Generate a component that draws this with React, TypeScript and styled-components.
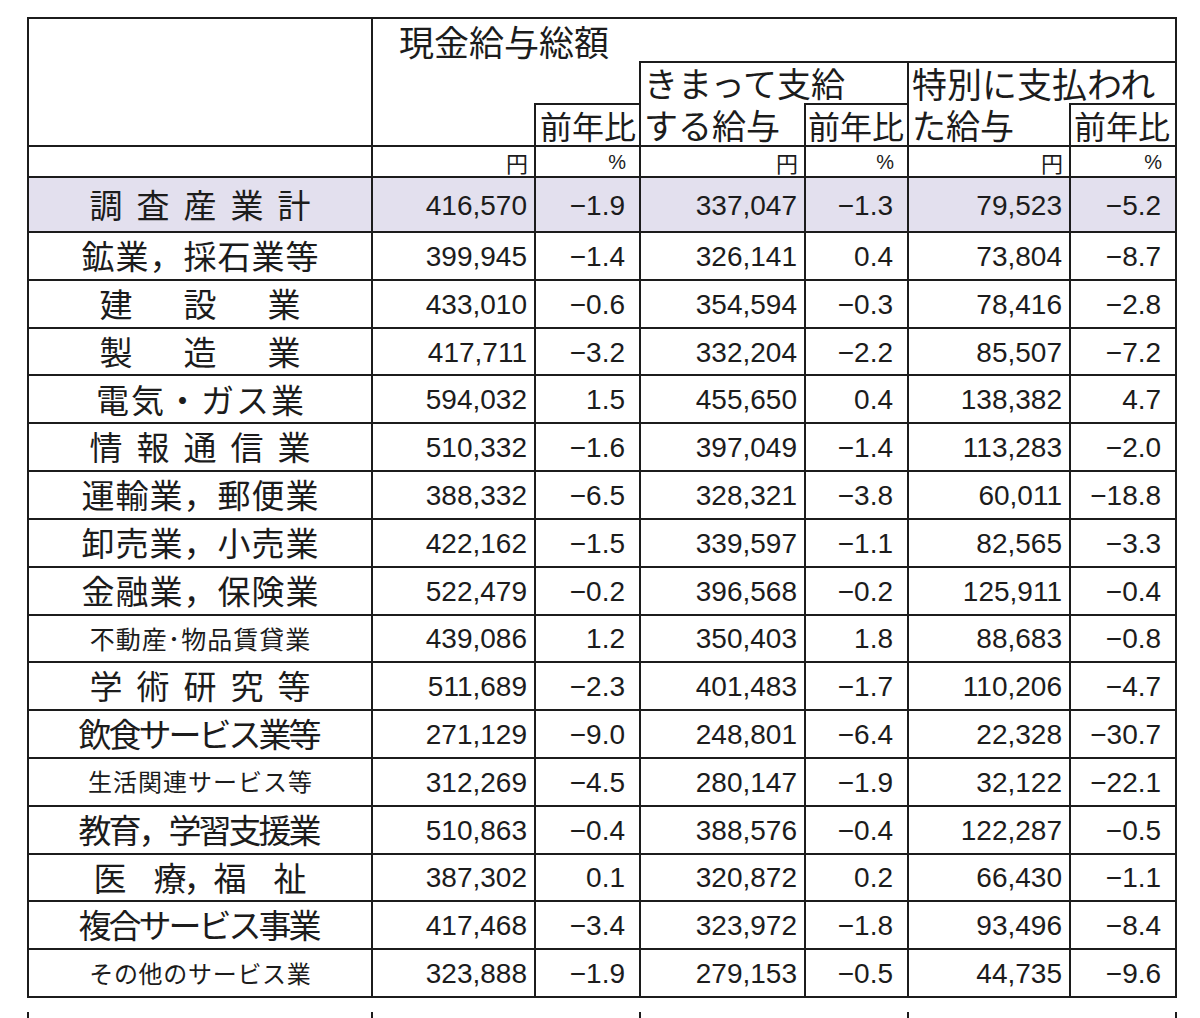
import styled, { createGlobalStyle } from "styled-components";

const LINE = "2px solid #1c1c1c";
const JP = `"Noto Sans CJK JP", "Noto Sans", sans-serif`;
const NUM = `"Liberation Sans", Arial, sans-serif`;

const COLS = [344, 163, 105, 165, 103, 162, 106];

type Industry = {
  label: string;
  size: number;
  spacing: number;
  values: string[];
  total?: boolean;
};

const industries: Industry[] = [
  { label: "調査産業計", size: 33, spacing: 14, total: true, values: ["416,570", "−1.9", "337,047", "−1.3", "79,523", "−5.2"] },
  { label: "鉱業，採石業等", size: 33, spacing: 1, values: ["399,945", "−1.4", "326,141", "0.4", "73,804", "−8.7"] },
  { label: "建設業", size: 33, spacing: 51, values: ["433,010", "−0.6", "354,594", "−0.3", "78,416", "−2.8"] },
  { label: "製造業", size: 33, spacing: 51, values: ["417,711", "−3.2", "332,204", "−2.2", "85,507", "−7.2"] },
  { label: "電気・ガス業", size: 33, spacing: 2, values: ["594,032", "1.5", "455,650", "0.4", "138,382", "4.7"] },
  { label: "情報通信業", size: 33, spacing: 14, values: ["510,332", "−1.6", "397,049", "−1.4", "113,283", "−2.0"] },
  { label: "運輸業，郵便業", size: 33, spacing: 1, values: ["388,332", "−6.5", "328,321", "−3.8", "60,011", "−18.8"] },
  { label: "卸売業，小売業", size: 33, spacing: 1, values: ["422,162", "−1.5", "339,597", "−1.1", "82,565", "−3.3"] },
  { label: "金融業，保険業", size: 33, spacing: 1, values: ["522,479", "−0.2", "396,568", "−0.2", "125,911", "−0.4"] },
  { label: "不動産･物品賃貸業", size: 25, spacing: 1, values: ["439,086", "1.2", "350,403", "1.8", "88,683", "−0.8"] },
  { label: "学術研究等", size: 33, spacing: 14, values: ["511,689", "−2.3", "401,483", "−1.7", "110,206", "−4.7"] },
  { label: "飲食サービス業等", size: 33, spacing: -3, values: ["271,129", "−9.0", "248,801", "−6.4", "22,328", "−30.7"] },
  { label: "生活関連サービス等", size: 24, spacing: 1, values: ["312,269", "−4.5", "280,147", "−1.9", "32,122", "−22.1"] },
  { label: "教育，学習支援業", size: 33, spacing: -3, values: ["510,863", "−0.4", "388,576", "−0.4", "122,287", "−0.5"] },
  { label: "医　療，福　祉", size: 33, spacing: -3, values: ["387,302", "0.1", "320,872", "0.2", "66,430", "−1.1"] },
  { label: "複合サービス事業", size: 33, spacing: -3, values: ["417,468", "−3.4", "323,972", "−1.8", "93,496", "−8.4"] },
  { label: "その他のサービス業", size: 24, spacing: 0.7, values: ["323,888", "−1.9", "279,153", "−0.5", "44,735", "−9.6"] },
];

const GlobalStyle = createGlobalStyle`
  html, body {
    margin: 0;
    background: #ffffff;
  }
  body {
    font-family: ${JP};
    color: #1c1c1c;
  }
`;

const Page = styled.div`
  padding: 17px 0 0 27px;
  width: 1200px;
  height: 1018px;
  box-sizing: border-box;
  overflow: hidden;
`;

const Sheet = styled.table`
  border-collapse: separate;
  border-spacing: 0;
  table-layout: fixed;
  width: 1150px;
  border-top: ${LINE};
  border-left: ${LINE};
`;

const NextSheet = styled(Sheet)`
  border-top: none;
  margin-top: 14px;
`;

const Row = styled.tr<{ $h: number; $shade?: boolean }>`
  height: ${(p) => p.$h}px;
  background: ${(p) => (p.$shade ? "#e3e0ee" : "#ffffff")};
`;

const Cell = styled.td<{ $top?: boolean; $noRight?: boolean; $noBottom?: boolean }>`
  padding: 0;
  white-space: nowrap;
  overflow: visible;
  border-top: ${(p) => (p.$top ? LINE : "none")};
  border-right: ${(p) => (p.$noRight ? "none" : LINE)};
  border-bottom: ${(p) => (p.$noBottom ? "none" : LINE)};
`;

const HeadCell = styled(Cell)<{ $indent?: number; $size?: number }>`
  font-family: ${JP};
  font-size: ${(p) => p.$size ?? 34}px;
  line-height: 34px;
  text-align: left;
  vertical-align: bottom;
  padding-left: ${(p) => p.$indent ?? 3}px;
  padding-bottom: 3px;
`;

const UnitCell = styled(Cell)<{ $pct?: boolean }>`
  font-family: ${(p) => (p.$pct ? NUM : JP)};
  font-size: ${(p) => (p.$pct ? 20 : 22)}px;
  line-height: 1;
  text-align: right;
  vertical-align: middle;
  padding-right: ${(p) => (p.$pct ? 13 : 6)}px;
`;

const LabelCell = styled(Cell)<{ $size: number; $spacing: number }>`
  font-family: ${JP};
  font-size: ${(p) => p.$size}px;
  letter-spacing: ${(p) => p.$spacing}px;
  text-indent: ${(p) => p.$spacing}px;
  line-height: 1.2;
  text-align: center;
  vertical-align: middle;
`;

const NumCell = styled(Cell)<{ $pct?: boolean }>`
  font-family: ${NUM};
  font-size: 28px;
  line-height: 1;
  text-align: right;
  vertical-align: middle;
  padding-right: ${(p) => (p.$pct ? 14 : 7)}px;
  padding-top: 2px;
`;

const Stub = styled(Cell)`
  border-bottom: none;
`;

function Columns() {
  return (
    <colgroup>
      {COLS.map((w, i) => (
        <col key={i} style={{ width: w }} />
      ))}
    </colgroup>
  );
}

export default function App() {
  return (
    <Page>
      <GlobalStyle />
      <Sheet>
        <Columns />
        <tbody>
          <Row $h={42}>
            <Cell rowSpan={3} />
            <HeadCell colSpan={6} $noBottom $indent={26} $size={35}>
              現金給与総額
            </HeadCell>
          </Row>
          <Row $h={42}>
            <Cell colSpan={2} $noBottom />
            <HeadCell colSpan={2} $top $noBottom>
              きまって支給
            </HeadCell>
            <HeadCell colSpan={2} $top $noBottom $size={35}>
              特別に支払われ
            </HeadCell>
          </Row>
          <Row $h={44}>
            <Cell />
            <HeadCell $top $size={32} $indent={4}>
              前年比
            </HeadCell>
            <HeadCell>する給与</HeadCell>
            <HeadCell $top $size={32} $indent={2}>
              前年比
            </HeadCell>
            <HeadCell>た給与</HeadCell>
            <HeadCell $top $size={32} $indent={3}>
              前年比
            </HeadCell>
          </Row>
          <Row $h={31}>
            <Cell />
            <UnitCell>円</UnitCell>
            <UnitCell $pct>%</UnitCell>
            <UnitCell>円</UnitCell>
            <UnitCell $pct>%</UnitCell>
            <UnitCell>円</UnitCell>
            <UnitCell $pct>%</UnitCell>
          </Row>
          {industries.map((row) => (
            <Row key={row.label} $h={row.total ? 55 : 47.8125} $shade={row.total}>
              <LabelCell $size={row.size} $spacing={row.spacing}>
                {row.label}
              </LabelCell>
              {row.values.map((v, i) => (
                <NumCell key={i} $pct={i % 2 === 1}>
                  {v}
                </NumCell>
              ))}
            </Row>
          ))}
        </tbody>
      </Sheet>
      <NextSheet>
        <Columns />
        <tbody>
          <Row $h={30}>
            <Stub />
            <Stub colSpan={2} />
            <Stub colSpan={2} />
            <Stub colSpan={2} />
          </Row>
        </tbody>
      </NextSheet>
    </Page>
  );
}
